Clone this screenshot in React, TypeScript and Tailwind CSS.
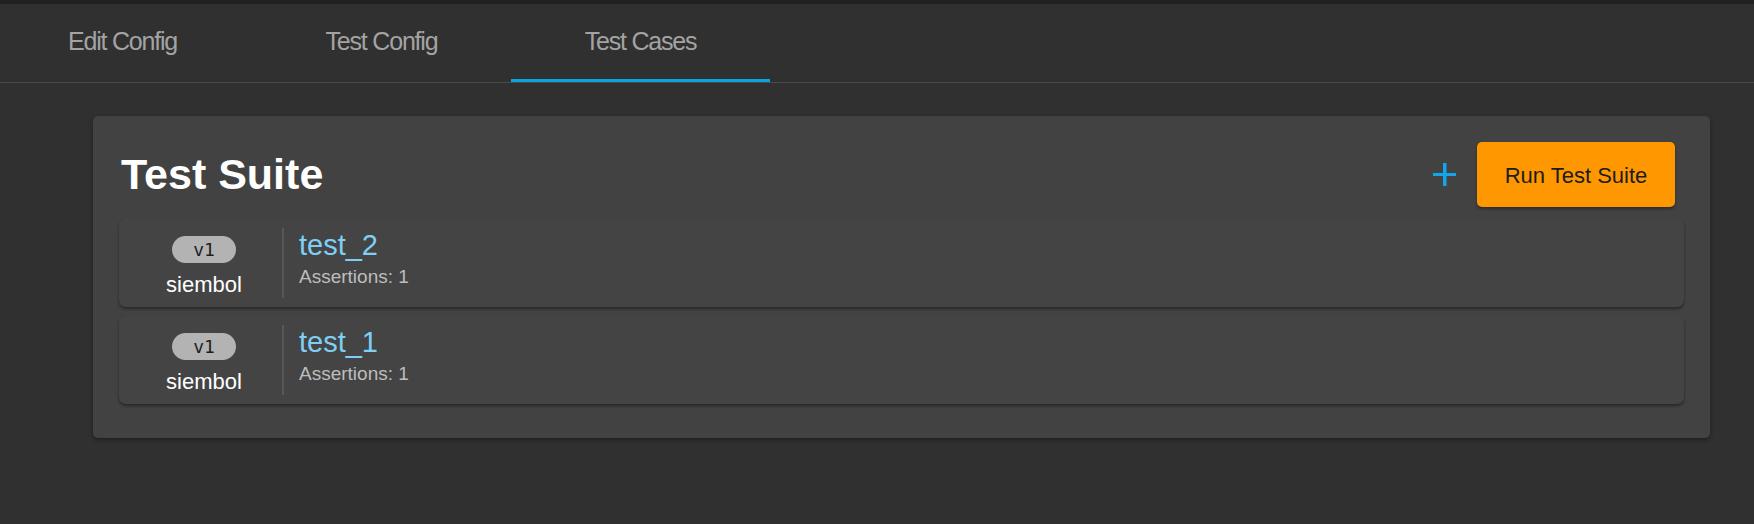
import React from "react";

const tabs = ["Edit Config", "Test Config", "Test Cases"];
const cases = ["test_2", "test_1"];

export default function App() {
  return (
    <div
      className="min-h-[524px] w-full bg-[#303030]"
      style={{ fontFamily: '"Liberation Sans", Arial, sans-serif' }}
    >
      <div className="h-[4px] bg-[#212121]" />
      <div className="h-[79px] border-b border-[#4a4a4a] bg-[#303030]">
        <div className="-ml-[7px] flex h-full">
          {tabs.map((t, i) => (
            <div
              key={t}
              className="relative flex h-full w-[259px] items-center justify-center"
            >
              <span className="pb-[3px] text-[25px] tracking-[-1.2px] text-[#a3a3a3]">
                {t}
              </span>
              {i === 2 && (
                <div className="absolute bottom-0 left-0 h-[3px] w-full bg-[#0aa3e3]" />
              )}
            </div>
          ))}
        </div>
      </div>

      <div className="ml-[93px] mr-[44px] mt-[33px] rounded-[5px] bg-[#424242] px-[26px] pb-[34px] pt-[26px] shadow-[0_2px_4px_rgba(0,0,0,0.35)]">
        <div className="flex h-[65px] items-center justify-between">
          <h1 className="pl-[2px] text-[43px] font-bold leading-none text-white">
            Test Suite
          </h1>
          <div className="mr-[9px] flex items-center gap-[20px]">
            <svg width="24" height="24" viewBox="0 0 24 24" className="mt-[1px]">
              <rect x="10" y="0" width="3.5" height="23" fill="#12a5e8" />
              <rect x="0" y="10" width="23" height="3" fill="#12a5e8" />
            </svg>
            <button className="h-[65px] w-[198px] rounded-[5px] bg-[#ff9800] pt-[1px] text-[22px] text-[#1c1c1c] shadow-[0_2px_3px_rgba(0,0,0,0.35)]">
              Run Test Suite
            </button>
          </div>
        </div>

        <div className="mt-[12px] flex flex-col gap-[9px]">
          {cases.map((c) => (
            <div
              key={c}
              className="flex h-[88px] items-stretch rounded-[7px] bg-[#444444] py-[9px] shadow-[0_2px_3px_rgba(0,0,0,0.4)]"
            >
              <div className="ml-[10px] flex w-[150px] flex-col items-center">
                <div
                  className="mt-[8px] flex h-[30px] w-[64px] items-center justify-center rounded-full bg-[#b3b3b3] text-[18px] text-[#1e1e1e]"
                  style={{ fontFamily: '"DejaVu Sans Mono", "Liberation Mono", monospace' }}
                >
                  v1
                </div>
                <div className="mt-[9px] text-[22px] leading-[26px] text-white">
                  siembol
                </div>
              </div>
              <div className="ml-[3px] w-[2px] bg-[#575757]" />
              <div className="flex flex-col pl-[15px]">
                <div className="mt-[1px] text-[29px] leading-[32px] text-[#7fcff5]">{c}</div>
                <div className="mt-[5px] text-[19px] leading-[22px] text-[#bdbdbd]">
                  Assertions: 1
                </div>
              </div>
            </div>
          ))}
        </div>
      </div>
    </div>
  );
}
